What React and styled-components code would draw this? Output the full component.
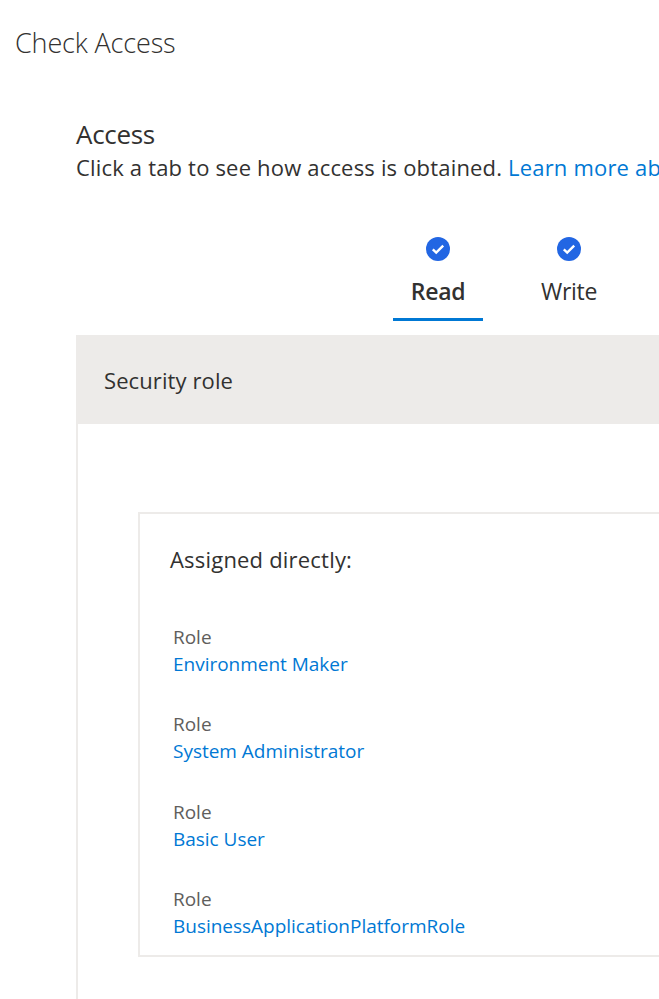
import React from 'react';
import styled, { createGlobalStyle } from 'styled-components';

const GlobalStyle = createGlobalStyle`
  html, body {
    margin: 0;
    background: #fff;
    overflow: hidden;
  }
`;

const Page = styled.div`
  width: 659px;
  height: 999px;
  overflow: hidden;
  font-family: "Open Sans", "Noto Sans", sans-serif;
  color: #323130;
`;

const PageTitle = styled.h1`
  margin: 0;
  padding: 24px 0 0 15px;
  height: 96px;
  box-sizing: border-box;
  font-size: 27px;
  line-height: 37px;
  font-weight: 300;
  letter-spacing: -0.15px;
  color: #323130;
`;

const Body = styled.div`
  padding-left: 76px;
`;

const SectionTitle = styled.h2`
  margin: 0;
  padding-top: 22px;
  font-size: 26px;
  line-height: 33px;
  font-weight: 400;
  letter-spacing: -0.3px;
`;

const Description = styled.p`
  margin: 0;
  font-size: 22px;
  line-height: 33px;
  white-space: nowrap;
  letter-spacing: 0.18px;
`;

const Link = styled.a`
  color: #0078d4;
  text-decoration: none;
`;

const Tabs = styled.div`
  display: flex;
  margin: 50px 0 14px 317px;
  gap: 41px;
`;

const Tab = styled.div`
  display: flex;
  flex-direction: column;
  align-items: center;
  width: ${(p) => p.$width}px;
  height: 87px;
  box-sizing: border-box;
  padding-top: 3px;
  border-bottom: 3px solid ${(p) => (p.$active ? '#0078d4' : 'transparent')};
`;

const TabLabel = styled.span`
  margin-top: 14px;
  font-size: 23px;
  line-height: 32px;
  font-weight: ${(p) => (p.$active ? 600 : 400)};
  letter-spacing: ${(p) => (p.$active ? '-0.3px' : '-0.3px')};
`;

const Panel = styled.div`
  border-left: 2px solid #edebe9;
  height: 700px;
`;

const PanelHeader = styled.div`
  display: flex;
  align-items: center;
  margin-left: -2px;
  height: 89px;
  padding-left: 28px;
  background: #edebe9;
  font-size: 22px;
  letter-spacing: 0.1px;
`;

const Card = styled.div`
  margin: 88px 0 0 60px;
  height: 445px;
  box-sizing: border-box;
  padding: 29px 0 0 30px;
  border: 2px solid #edebe9;
  border-right: 0;
`;

const CardTitle = styled.div`
  font-size: 22px;
  line-height: 32px;
  letter-spacing: 0.2px;
  margin-bottom: 49px;
`;

const RoleList = styled.div`
  display: flex;
  flex-direction: column;
  gap: 33.4px;
  padding-left: 3px;
`;

const Role = styled.div`
  display: flex;
  flex-direction: column;
  font-size: 19px;
  line-height: 27px;
  letter-spacing: -0.02px;
`;

const RoleLabel = styled.span`
  color: #605e5c;
`;

const CheckIcon = () => (
  <svg width="24" height="24" viewBox="0 0 24 24" aria-hidden="true">
    <circle cx="12" cy="12" r="12" fill="#2266e3" />
    <path d="M6.8 12.4l3.4 3.2 7-7" fill="none" stroke="#fff" strokeWidth="2.4" />
  </svg>
);

const roles = [
  'Environment Maker',
  'System Administrator',
  'Basic User',
  'BusinessApplicationPlatformRole',
];

export default function App() {
  return (
    <Page>
      <GlobalStyle />
      <PageTitle>Check Access</PageTitle>
      <Body>
        <SectionTitle>Access</SectionTitle>
        <Description>
          Click a tab to see how access is obtained. <Link href="#">Learn more about access</Link>
        </Description>
        <Tabs>
          <Tab $active $width={90}>
            <CheckIcon />
            <TabLabel $active>Read</TabLabel>
          </Tab>
          <Tab $width={90}>
            <CheckIcon />
            <TabLabel>Write</TabLabel>
          </Tab>
        </Tabs>
        <Panel>
          <PanelHeader>Security role</PanelHeader>
          <Card>
            <CardTitle>Assigned directly:</CardTitle>
            <RoleList>
              {roles.map((role) => (
                <Role key={role}>
                  <RoleLabel>Role</RoleLabel>
                  <Link href="#">{role}</Link>
                </Role>
              ))}
            </RoleList>
          </Card>
        </Panel>
      </Body>
    </Page>
  );
}
